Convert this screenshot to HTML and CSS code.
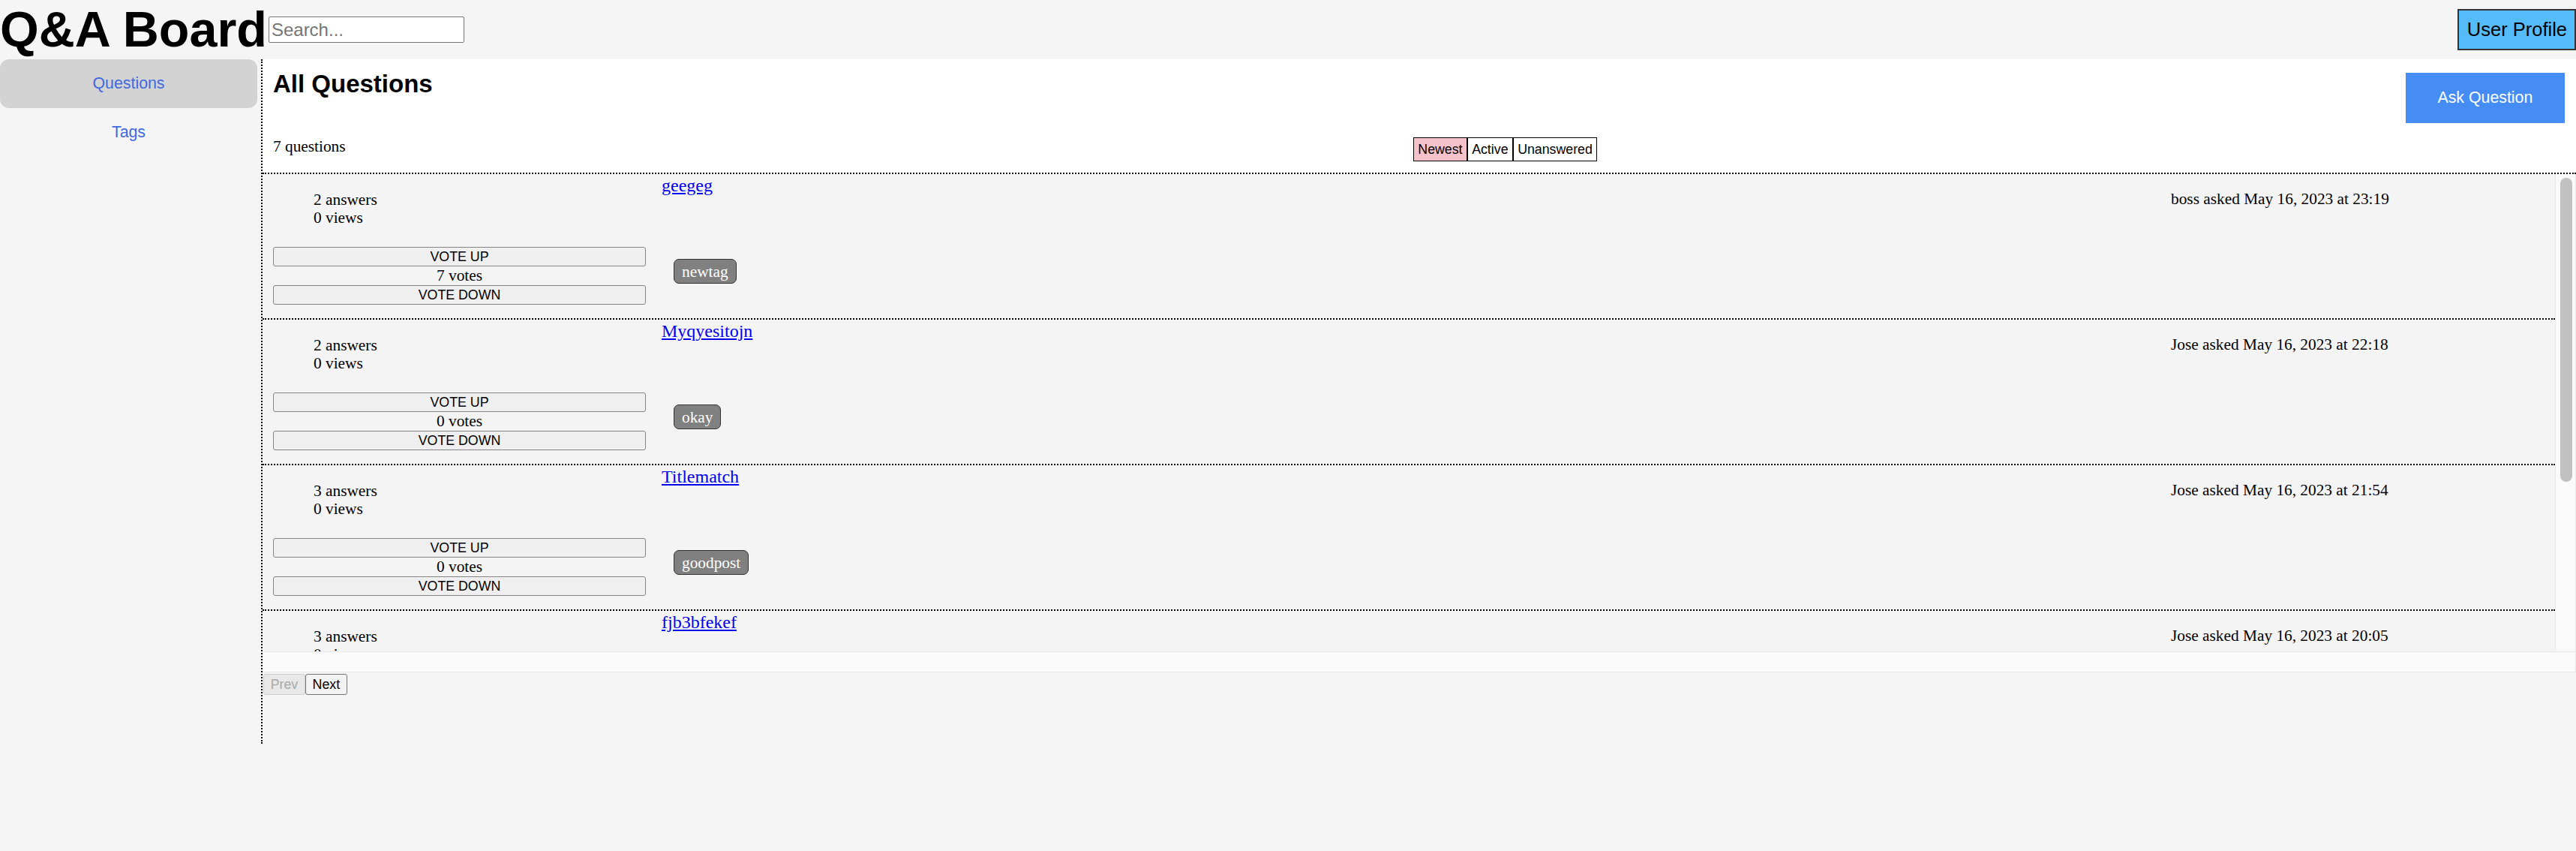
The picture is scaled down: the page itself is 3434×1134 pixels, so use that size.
FILE: index.html
```html
<!DOCTYPE html>
<html lang="en">
<head>
<meta charset="utf-8">
<title>Q&amp;A Board</title>
<link rel="stylesheet" href="styles.css">
</head>
<body>
<header class="topbar">
  <h1 class="brand">Q&amp;A Board</h1>
  <input class="search" type="text" placeholder="Search...">
  <button class="profile">User Profile</button>
</header>
<div class="layout">
  <nav class="sidebar">
    <a class="nav-item active" href="#">Questions</a>
    <a class="nav-item" href="#">Tags</a>
  </nav>
  <main class="main">
    <section class="intro">
      <div class="intro-top">
        <h2 class="page-title">All Questions</h2>
        <button class="ask">Ask Question</button>
      </div>
      <div class="intro-bottom">
        <div class="count">7 questions</div>
        <div class="sorts"><button class="sort selected">Newest</button><button class="sort">Active</button><button class="sort">Unanswered</button></div>
      </div>
    </section>
    <div class="list-frame">
      <div class="list-row">
        <div class="list">
          <article class="question">
            <div class="left">
              <div class="stats"><div>2 answers</div><div>0 views</div></div>
              <div class="vote">
                <button class="vote-btn">VOTE UP</button>
                <div class="votes">7 votes</div>
                <button class="vote-btn">VOTE DOWN</button>
              </div>
            </div>
            <div class="middle">
              <div class="title-line"><a class="title" href="#">geegeg</a></div>
              <div class="tags"><button class="tag">newtag</button></div>
            </div>
            <div class="meta">boss asked May 16, 2023 at 23:19</div>
          </article>
          <article class="question">
            <div class="left">
              <div class="stats"><div>2 answers</div><div>0 views</div></div>
              <div class="vote">
                <button class="vote-btn">VOTE UP</button>
                <div class="votes">0 votes</div>
                <button class="vote-btn">VOTE DOWN</button>
              </div>
            </div>
            <div class="middle">
              <div class="title-line"><a class="title" href="#">Myqyesitojn</a></div>
              <div class="tags"><button class="tag">okay</button></div>
            </div>
            <div class="meta">Jose asked May 16, 2023 at 22:18</div>
          </article>
          <article class="question">
            <div class="left">
              <div class="stats"><div>3 answers</div><div>0 views</div></div>
              <div class="vote">
                <button class="vote-btn">VOTE UP</button>
                <div class="votes">0 votes</div>
                <button class="vote-btn">VOTE DOWN</button>
              </div>
            </div>
            <div class="middle">
              <div class="title-line"><a class="title" href="#">Titlematch</a></div>
              <div class="tags"><button class="tag">goodpost</button></div>
            </div>
            <div class="meta">Jose asked May 16, 2023 at 21:54</div>
          </article>
          <article class="question">
            <div class="left">
              <div class="stats"><div>3 answers</div><div>0 views</div></div>
              <div class="vote">
                <button class="vote-btn">VOTE UP</button>
                <div class="votes">0 votes</div>
                <button class="vote-btn">VOTE DOWN</button>
              </div>
            </div>
            <div class="middle">
              <div class="title-line"><a class="title" href="#">fjb3bfekef</a></div>
              <div class="tags"><button class="tag">newtag</button></div>
            </div>
            <div class="meta">Jose asked May 16, 2023 at 20:05</div>
          </article>
        </div>
        <div class="vscroll"><div class="vthumb"></div></div>
      </div>
      <div class="hscroll"></div>
    </div>
    <div class="pager"><button class="page-btn" disabled>Prev</button><button class="page-btn">Next</button></div>
  </main>
</div>
</body>
</html>
```

FILE: styles.css
```css
* {
  box-sizing: border-box;
}

html,
body {
  margin: 0;
  padding: 0;
}

body {
  width: 3434px;
  height: 1134px;
  overflow: hidden;
  background: #f5f5f5;
  color: #000;
  font-family: "Liberation Serif", "Times New Roman", serif;
  font-size: 21.33px;
}

/* ---------- header ---------- */
.topbar {
  display: flex;
  align-items: center;
  height: 79px;
}

.brand {
  margin: 0;
  font-family: "Liberation Sans", Arial, sans-serif;
  font-weight: bold;
  font-size: 66.5px;
  line-height: 79px;
  white-space: nowrap;
}

.search {
  margin-left: 2px;
  width: 261px;
  height: 35px;
  padding: 1px 3px;
  border: 1px solid #767676;
  border-radius: 2px;
  background: #fff;
  font-family: "Liberation Sans", Arial, sans-serif;
  font-size: 24px;
  color: #000;
}

.search::placeholder {
  color: #757575;
}

.profile {
  margin-left: auto;
  height: 55px;
  padding: 0 10px 0 11px;
  border: 2px solid #333;
  background: #56bbf9;
  color: #000;
  font-family: "Liberation Sans", Arial, sans-serif;
  font-size: 25.5px;
}

/* ---------- layout ---------- */
.layout {
  display: flex;
}

.sidebar {
  flex: none;
  width: 350px;
  min-height: 912px;
  padding-right: 5px;
  border-right: 2px dotted #000;
}

.nav-item {
  display: block;
  height: 65px;
  line-height: 65px;
  text-align: center;
  border-radius: 12px;
  color: royalblue;
  text-decoration: none;
  font-family: "Liberation Sans", Arial, sans-serif;
  font-size: 21.33px;
}

.nav-item.active {
  background: #d3d3d3;
}

.main {
  flex: 1;
  min-width: 0;
}

/* ---------- intro ---------- */
.intro {
  background: #fff;
  padding: 13.5px 15px 15px 14px;
  border-bottom: 2px dotted #000;
}

.intro-top {
  display: flex;
  justify-content: space-between;
  align-items: flex-start;
}

.page-title {
  margin: 0;
  font-family: "Liberation Sans", Arial, sans-serif;
  font-weight: bold;
  font-size: 33px;
  line-height: 37px;
}

.ask {
  margin-top: 4.5px;
  padding: 21.3px 42.7px;
  border: none;
  background: #458df5;
  color: #fff;
  font-family: "Liberation Sans", Arial, sans-serif;
  font-size: 21.33px;
  line-height: 24.5px;
}

.intro-bottom {
  display: flex;
  align-items: flex-start;
  margin-top: 19px;
}

.count {
  flex: none;
  width: 1520px;
  line-height: 24.5px;
}

.sorts {
  display: flex;
}

.sort {
  padding: 4.8px 5.3px;
  border: 1px solid #000;
  border-radius: 0;
  background: #fff;
  color: #000;
  font-family: "Liberation Sans", Arial, sans-serif;
  font-size: 17.78px;
  line-height: 20.4px;
}

.sort.selected {
  background: #f5c2cb;
}

/* ---------- question list ---------- */
.list-row {
  display: flex;
  height: 636px;
}

.list {
  flex: 1;
  min-width: 0;
  overflow: hidden;
}

.vscroll {
  flex: none;
  width: 28px;
  padding: 5px 4px 0 6px;
  border-left: 1px solid #e8e8e8;
  border-right: 1px solid #e8e8e8;
  background: #fafafa;
}

.vthumb {
  height: 405px;
  border-radius: 8px;
  background: #c1c1c1;
}

.hscroll {
  height: 28px;
  border-top: 1px solid #e8e8e8;
  border-bottom: 1px solid #e8e8e8;
  border-right: 1px solid #e8e8e8;
  background: #fafafa;
}

.question {
  display: flex;
  height: 194px;
  padding-left: 14px;
  border-bottom: 2px dotted #000;
  background: #f4f4f4;
}

.left {
  flex: none;
  width: 497px;
}

.stats {
  padding-top: 22px;
  padding-left: 54px;
  line-height: 24px;
}

.vote {
  margin-top: 27px;
}

.vote-btn {
  display: block;
  width: 100%;
  height: 26px;
  padding: 0;
  border: 1px solid #858585;
  border-radius: 3px;
  background: #efefef;
  color: #000;
  font-family: "Liberation Sans", Arial, sans-serif;
  font-size: 17.78px;
}

.votes {
  text-align: center;
  line-height: 25px;
}

.middle {
  flex: none;
  width: 2012px;
  margin-left: 21px;
  padding-top: 2px;
}

.title-line {
  font-size: 24px;
  line-height: 27px;
}

.title {
  color: #0000ee;
  text-decoration: underline;
}

.tags {
  margin-top: 84px;
  padding-left: 16px;
}

.tag {
  padding: 3.5px 10px;
  border: 1px solid #333;
  border-radius: 7px;
  background: #808080;
  color: #fff;
  font-family: "Liberation Serif", "Times New Roman", serif;
  font-size: 21.33px;
  line-height: 24px;
}

.meta {
  flex: 1;
  min-width: 0;
  padding-top: 21px;
  line-height: 24px;
  white-space: nowrap;
}

/* ---------- pager ---------- */
.pager {
  display: flex;
  padding: 2px 0 0 1px;
}

.page-btn {
  height: 28px;
  padding: 0 8.7px;
  border: 1px solid #767676;
  border-radius: 3px;
  background: #f3f3f3;
  color: #000;
  font-family: "Liberation Sans", Arial, sans-serif;
  font-size: 17.78px;
}

.page-btn:disabled {
  border-color: #cfcfcf;
  background: #e8e8e8;
  color: #a8a8a8;
}
```
